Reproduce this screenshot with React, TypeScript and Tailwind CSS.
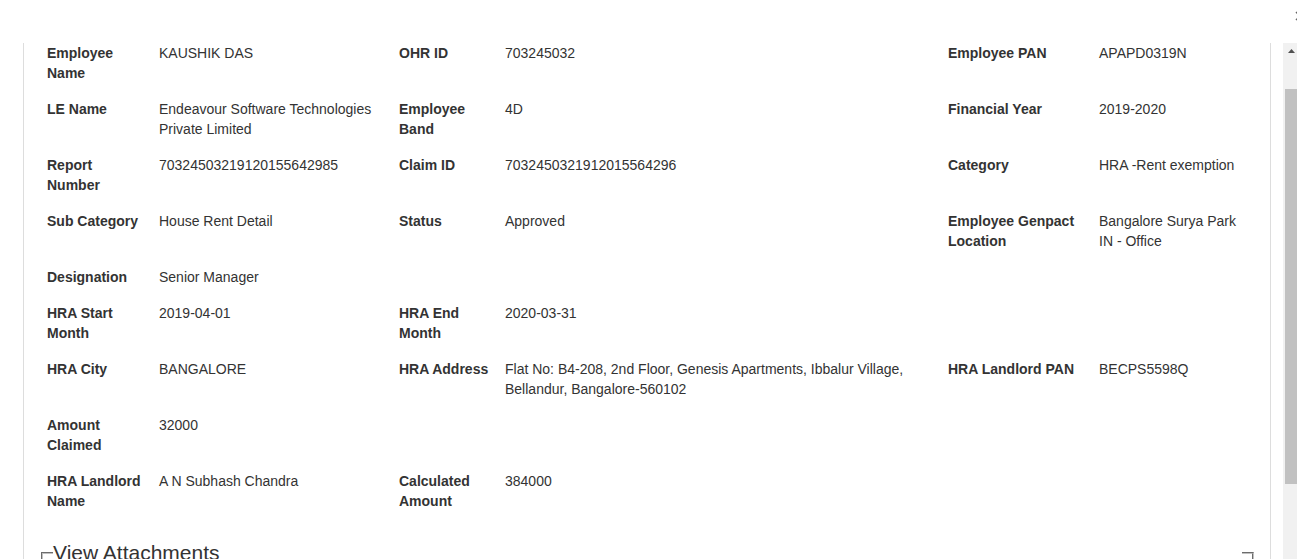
type Cell = [string, string] | null;

const rows: Cell[][] = [
  [["Employee Name", "KAUSHIK DAS"], ["OHR ID", "703245032"], ["Employee PAN", "APAPD0319N"]],
  [
    ["LE Name", "Endeavour Software Technologies Private Limited"],
    ["Employee Band", "4D"],
    ["Financial Year", "2019-2020"],
  ],
  [
    ["Report Number", "70324503219120155642985"],
    ["Claim ID", "7032450321912015564296"],
    ["Category", "HRA -Rent exemption"],
  ],
  [
    ["Sub Category", "House Rent Detail"],
    ["Status", "Approved"],
    ["Employee Genpact Location", "Bangalore Surya Park IN - Office"],
  ],
  [["Designation", "Senior Manager"], null, null],
  [["HRA Start Month", "2019-04-01"], ["HRA End Month", "2020-03-31"], null],
  [
    ["HRA City", "BANGALORE"],
    ["HRA Address", "Flat No: B4-208, 2nd Floor, Genesis Apartments, Ibbalur Village, Bellandur, Bangalore-560102"],
    ["HRA Landlord PAN", "BECPS5598Q"],
  ],
  [["Amount Claimed", "32000"], null, null],
  [["HRA Landlord Name", "A N Subhash Chandra"], ["Calculated Amount", "384000"], null],
];

// label padding per column so wrapping matches
const labelPad = ["pr-[14px]", "pr-[12px]", "pr-[10px]"];
const valuePad = ["pr-[15px]", "pr-[15px]", "pr-[10px]"];

export default function App() {
  return (
    <div
      className="relative w-[1297px] h-[559px] overflow-hidden bg-white text-[14px] leading-[20px] text-[#333]"
      style={{ fontFamily: '"Liberation Sans", Arial, sans-serif' }}
    >
      {/* header (close button mostly off screen) */}
      <div className="h-[43px]" />
      <svg
        className="absolute left-[1295px] top-[11px]"
        width="10"
        height="10"
        viewBox="0 0 10 10"
      >
        <path d="M1 1 L9 9 M9 1 L1 9" stroke="#666" strokeWidth="1.5" />
      </svg>

      <div className="flex h-[516px]">
        {/* modal body */}
        <div className="ml-[23px] w-[1248px] shrink-0 border-x border-[#dddddd]">
          <div className="grid grid-cols-[112px_240px_106px_443px_151px_1fr] gap-y-4 pl-[23px] pr-[14px]">
            {rows.map((row, ri) =>
              row.map((cell, ci) =>
                cell ? (
                  <>
                    <div key={`${ri}-${ci}-l`} className={`font-bold ${labelPad[ci]}`}>
                      {cell[0]}
                    </div>
                    <div key={`${ri}-${ci}-v`} className={valuePad[ci]}>
                      {cell[1]}
                    </div>
                  </>
                ) : (
                  <>
                    <div key={`${ri}-${ci}-l`} />
                    <div key={`${ri}-${ci}-v`} />
                  </>
                )
              )
            )}
          </div>

          <fieldset className="mt-[27px] ml-[17px] mr-[16px] h-[200px] border-2 border-[#c0c0c0] [border-style:groove] px-[10px]">
            <legend className="w-full text-[21px] leading-[30px] text-[#333]">View Attachments</legend>
          </fieldset>
        </div>

        {/* scrollbar */}
        <div className="ml-[12px] w-[17px] shrink-0 bg-[#f1f1f1]">
          <div className="flex h-[17px] items-center justify-center">
            <svg width="7" height="4" viewBox="0 0 7 4" className="mt-[-1px] -ml-[1px]">
              <polygon points="3.5,0 7,4 0,4" fill="#505050" />
            </svg>
          </div>
          <div className="mt-[29px] ml-[2px] w-[13px] h-[395px] bg-[#c1c1c1]" />
        </div>
      </div>
    </div>
  );
}
